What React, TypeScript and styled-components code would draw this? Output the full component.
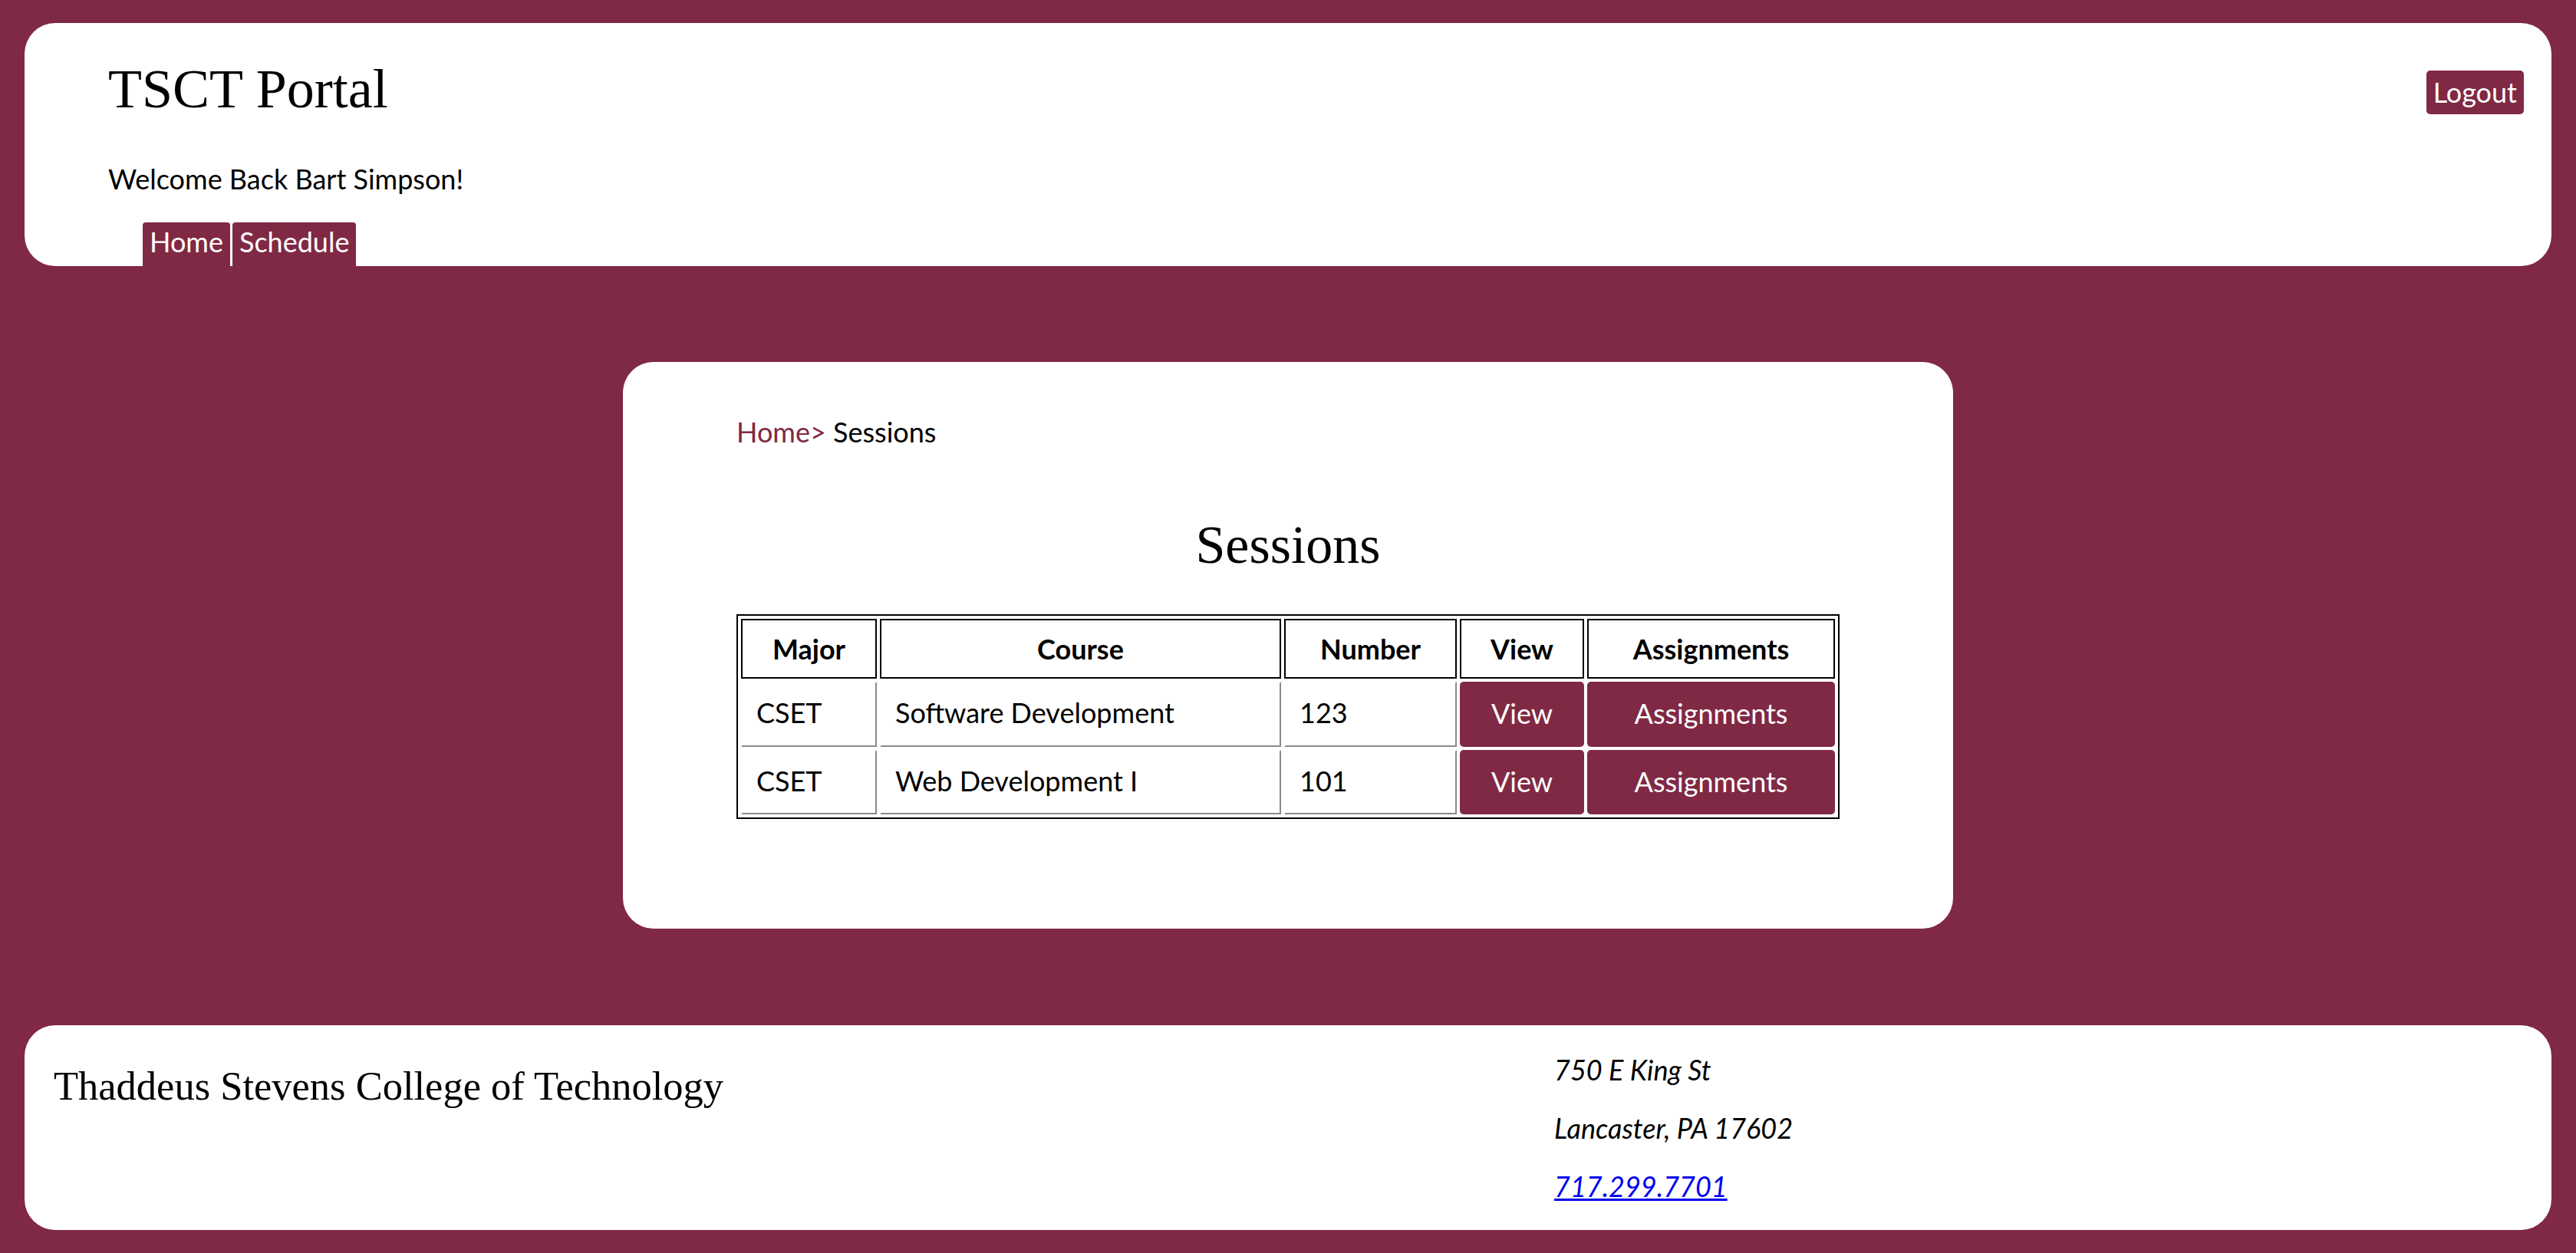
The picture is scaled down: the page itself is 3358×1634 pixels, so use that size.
import React from "react";
import styled, { createGlobalStyle } from "styled-components";

const MAROON = "#802944";

const Global = createGlobalStyle`
  html, body { margin: 0; padding: 0; }
  body {
    background: ${MAROON};
    font-family: Lato, "Liberation Sans", sans-serif;
    font-size: 36px;
    color: #000;
  }
  * { box-sizing: border-box; }
`;

const Page = styled.div`
  padding: 30px 32px 31px;
  display: flex;
  flex-direction: column;
`;

const Card = styled.section`
  background: #fff;
  border-radius: 40px;
`;

const HeaderCard = styled(Card)`
  height: 317px;
  padding: 50px 36px 0 109px;
  display: flex;
  flex-direction: column;
  overflow: hidden;
`;

const TopRow = styled.div`
  display: flex;
  justify-content: space-between;
  align-items: flex-start;
`;

const SerifTitle = styled.h1<{ $size: number }>`
  margin: 0;
  font-family: "Liberation Serif", "Times New Roman", serif;
  font-weight: 400;
  font-size: ${(p) => p.$size}px;
  line-height: 1;
`;

const Button = styled.button`
  background: ${MAROON};
  color: #fff;
  border: 0;
  font-family: Lato, "Liberation Sans", sans-serif;
  font-size: 36px;
  line-height: 1.2;
  cursor: pointer;
`;

const LogoutButton = styled(Button)`
  margin-top: 12px;
  padding: 7px 9px;
  border-radius: 5px;
`;

const Welcome = styled.p`
  margin: 60px 0 0;
  line-height: 1.2;
`;

const Nav = styled.nav`
  margin: 35px 0 0 45px;
  display: flex;
  gap: 3px;
`;

const NavButton = styled(Button)`
  padding: 4px 9px 11px;
  border-radius: 4px 4px 0 0;
`;

const MainCard = styled(Card)`
  width: 1734px;
  margin: 125px auto 0;
  padding: 70px 148px 143px;
`;

const Breadcrumb = styled.div`
  line-height: 1.2;
`;

const Crumb = styled.a`
  color: ${MAROON};
  text-decoration: none;
`;

const Heading = styled(SerifTitle)`
  margin-top: 91px;
  text-align: center;
`;

const Table = styled.table`
  margin-top: 55px;
  width: 100%;
  table-layout: fixed;
  border: 2px solid #000;
  border-collapse: separate;
  border-spacing: 4px;
`;

const Th = styled.th<{ $w: number }>`
  width: ${(p) => p.$w}px;
  border: 2px solid #000;
  padding: 16px 0 15px;
  font-weight: 700;
  text-align: center;
  line-height: 1.2;
`;

const Td = styled.td`
  border: 2px solid;
  border-color: transparent #8a8a8a #8a8a8a transparent;
  padding: 17px 18px 20px;
  line-height: 1.2;
  text-align: left;
`;

const ActionTd = styled.td`
  padding: 0;
  border: 0;
`;

const CellButton = styled(Button)`
  display: block;
  width: 100%;
  padding: 20px 0 21px;
  border-radius: 5px;
  text-align: center;
`;

const FooterCard = styled(Card)`
  margin-top: 126px;
  height: 267px;
  display: grid;
  grid-template-columns: 1956px 1fr;
  padding-left: 38px;
`;

const FooterLeft = styled.div`
  padding-top: 53px;
`;

const Address = styled.address`
  padding-top: 37px;
  display: flex;
  flex-direction: column;
  gap: 33px;
  font-style: italic;
  line-height: 1.2;
`;

const Phone = styled.a`
  color: #0000ee;
  text-decoration: underline;
  align-self: flex-start;
`;

const sessions = [
  { major: "CSET", course: "Software Development", number: "123" },
  { major: "CSET", course: "Web Development I", number: "101" },
];

export default function App() {
  return (
    <>
      <Global />
      <Page>
        <HeaderCard>
          <TopRow>
            <SerifTitle $size={72}>TSCT Portal</SerifTitle>
            <LogoutButton>Logout</LogoutButton>
          </TopRow>
          <Welcome>Welcome Back Bart Simpson!</Welcome>
          <Nav>
            <NavButton>Home</NavButton>
            <NavButton>Schedule</NavButton>
          </Nav>
        </HeaderCard>

        <MainCard>
          <Breadcrumb>
            <Crumb href="#">Home&gt;</Crumb> Sessions
          </Breadcrumb>
          <Heading as="h2" $size={70}>
            Sessions
          </Heading>
          <Table>
            <thead>
              <tr>
                <Th $w={177}>Major</Th>
                <Th $w={523}>Course</Th>
                <Th $w={225}>Number</Th>
                <Th $w={162}>View</Th>
                <Th $w={323}>Assignments</Th>
              </tr>
            </thead>
            <tbody>
              {sessions.map((s) => (
                <tr key={s.course}>
                  <Td>{s.major}</Td>
                  <Td>{s.course}</Td>
                  <Td>{s.number}</Td>
                  <ActionTd>
                    <CellButton>View</CellButton>
                  </ActionTd>
                  <ActionTd>
                    <CellButton>Assignments</CellButton>
                  </ActionTd>
                </tr>
              ))}
            </tbody>
          </Table>
        </MainCard>

        <FooterCard>
          <FooterLeft>
            <SerifTitle as="h3" $size={52.5}>
              Thaddeus Stevens College of Technology
            </SerifTitle>
          </FooterLeft>
          <Address>
            <span>750 E King St</span>
            <span>Lancaster, PA 17602</span>
            <Phone href="#">717.299.7701</Phone>
          </Address>
        </FooterCard>
      </Page>
    </>
  );
}
